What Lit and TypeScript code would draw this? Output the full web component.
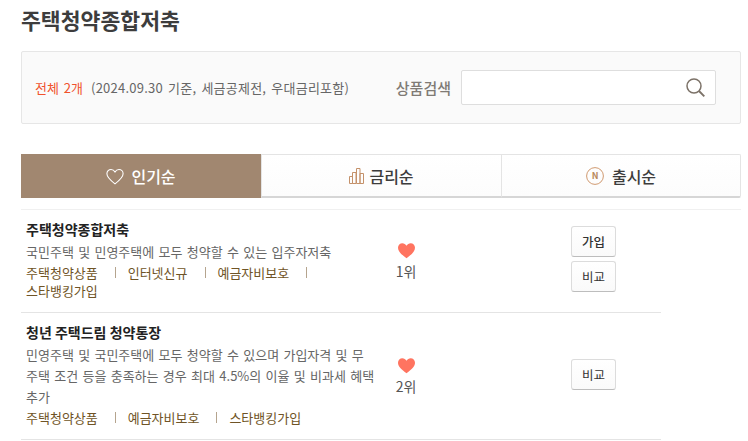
import { LitElement, html, css, svg } from 'lit';
import { customElement } from 'lit/decorators.js';

interface Product {
  name: string;
  desc: string;
  tags: string[];
  rank: string;
  join: boolean;
}

const PRODUCTS: Product[] = [
  {
    name: '주택청약종합저축',
    desc: '국민주택 및 민영주택에 모두 청약할 수 있는 입주자저축',
    tags: ['주택청약상품', '인터넷신규', '예금자비보호', '스타뱅킹가입'],
    rank: '1위',
    join: true,
  },
  {
    name: '청년 주택드림 청약통장',
    desc: '민영주택 및 국민주택에 모두 청약할 수 있으며 가입자격 및 무\n주택 조건 등을 충족하는 경우 최대 4.5%의 이율 및 비과세 혜택\n추가',
    tags: ['주택청약상품', '예금자비보호', '스타뱅킹가입'],
    rank: '2위',
    join: false,
  },
];

const heart = svg`<path d="M10 17.2 C4 12.6 1 9.8 1 6 C1 3.2 3.1 1.2 5.6 1.2 C7.4 1.2 9 2.2 10 4 C11 2.2 12.6 1.2 14.4 1.2 C16.9 1.2 19 3.2 19 6 C19 9.8 16 12.6 10 17.2 Z"/>`;

@customElement('app-root')
export class AppRoot extends LitElement {
  static styles = css`
    :host {
      display: block;
      height: 441px;
      overflow: hidden;
      background: #fff;
      font-family: 'Noto Sans CJK KR', 'Noto Sans', sans-serif;
      color: #333;
    }
    .page {
      padding: 6px 7px 0 21px;
    }
    h1 {
      margin: 0;
      font-size: 21.6px;
      line-height: 28px;
      font-weight: 700;
      color: #3d3d3d;
    }
    .panel {
      margin-top: 17px;
      height: 73px;
      box-sizing: border-box;
      display: flex;
      align-items: center;
      padding: 0 24px 0 13px;
      background: #fafafa;
      border: 1px solid #e6e6e6;
      border-radius: 2px;
    }
    .total {
      font-size: 13px;
      word-spacing: 2px;
      color: #f0522d;
      margin-right: 8px;
    }
    .basis {
      font-size: 13px;
      word-spacing: 2px;
      letter-spacing: 0.23px;
      color: #666;
    }
    .search-label {
      margin-left: auto;
      margin-right: 10px;
      font-size: 15px;
      font-weight: 500;
      color: #7f7a75;
    }
    .search {
      width: 255px;
      height: 35px;
      box-sizing: border-box;
      display: flex;
      align-items: center;
      justify-content: flex-end;
      padding-right: 10px;
      background: #fff;
      border: 1px solid #dedede;
      border-radius: 2px;
    }
    .search svg {
      display: block;
    }
    .tabs {
      margin-top: 30px;
      display: grid;
      grid-template-columns: 240px 241px 239px;
      height: 44px;
    }
    .tab {
      display: flex;
      align-items: center;
      justify-content: center;
      box-sizing: border-box;
      font-size: 16px;
      font-weight: 500;
      color: #3c3c3c;
      border-top: 1px solid #e4e4e4;
      border-bottom: 2px solid #d6d6d6;
      border-right: 1px solid #e4e4e4;
      background: linear-gradient(#fff, #fcfcfc);
    }
    .tab.popular {
      gap: 7px;
      background: #a18770;
      color: #fff;
      border: none;
    }
    .tab.rate {
      gap: 5px;
      border-left: 1px solid #e4e4e4;
    }
    .tab.release {
      gap: 8px;
      border-radius: 0 2px 2px 0;
    }
    .n-mark {
      font-size: 9px;
      font-weight: 700;
      fill: #b98a5e;
      text-anchor: middle;
    }
    .list {
      margin-top: 11px;
      border-top: 1px solid #f0f0f0;
    }
    .row {
      width: 640px;
      box-sizing: border-box;
      display: grid;
      grid-template-columns: 355px 50px 1fr;
      align-items: center;
      padding: 9px 45px 12px 5px;
      border-bottom: 1px solid #e4e4e4;
    }
    .name {
      font-size: 14px;
      line-height: 20px;
      font-weight: 700;
      color: #222;
    }
    .desc {
      margin-top: 2px;
      font-size: 13px;
      line-height: 21px;
      word-spacing: 1.4px;
      white-space: pre-line;
      color: #666;
    }
    .tags {
      margin-top: 2px;
      font-size: 13px;
      line-height: 18px;
      color: #6f5426;
    }
    .tag {
      white-space: nowrap;
    }
    .sep {
      display: inline-block;
      width: 1px;
      height: 11px;
      margin: 0 9px 0 17px;
      background: #b5a48e;
    }
    .rank {
      display: flex;
      flex-direction: column;
      align-items: center;
      padding-top: 4px;
      font-size: 14px;
      line-height: 19px;
      color: #555;
    }
    .rank svg {
      display: block;
      fill: #ff7460;
      margin-bottom: 3px;
    }
    .actions {
      display: flex;
      flex-direction: column;
      gap: 4px;
      justify-self: end;
      margin-top: -1px;
    }
    button {
      width: 45px;
      height: 31px;
      padding: 0;
      box-sizing: border-box;
      font: inherit;
      font-size: 12.5px;
      color: #333;
      background: linear-gradient(#fff, #fafafa);
      border: 1px solid #dcdcdc;
      border-bottom-color: #bdbdbd;
      border-radius: 3px;
    }
    button.strong {
      font-weight: 500;
    }
  `;

  private renderTags(tags: string[]) {
    return tags.map(
      (t, i) => html`<span class="tag">${t}</span>${i < tags.length - 1 ? html`<span class="sep"></span> ` : ''}`
    );
  }

  private renderRow(p: Product) {
    return html`
      <div class="row">
        <div>
          <div class="name">${p.name}</div>
          <div class="desc">${p.desc}</div>
          <div class="tags">${this.renderTags(p.tags)}</div>
        </div>
        <div class="rank">
          <svg width="19" height="17" viewBox="0 0 20 18">${heart}</svg>
          ${p.rank}
        </div>
        <div class="actions">
          ${p.join ? html`<button class="strong">가입</button>` : ''}
          <button>비교</button>
        </div>
      </div>
    `;
  }

  render() {
    return html`
      <div class="page">
        <h1>주택청약종합저축</h1>
        <div class="panel">
          <span class="total">전체 2개</span>
          <span class="basis">(2024.09.30 기준, 세금공제전, 우대금리포함)</span>
          <span class="search-label">상품검색</span>
          <div class="search">
            <svg width="19" height="19" viewBox="0 0 19 19" fill="none" stroke="#7c7268" stroke-width="1.5">
              <circle cx="8" cy="8" r="7" />
              <path d="M13 13 L18.3 18.3" stroke-width="1.9" />
            </svg>
          </div>
        </div>
        <div class="tabs">
          <div class="tab popular">
            <svg width="18" height="17" viewBox="0 0 20 18" fill="none" stroke="#fff" stroke-width="1.2">${heart}</svg>
            인기순
          </div>
          <div class="tab rate">
            <svg width="15" height="16" viewBox="0 0 15 16" fill="none" stroke="#c4916a">
              <path d="M.5 8.5h3v7h-3zM3.5 4.5h3.5v11h-3.5zM7.5.5h3.5v15h-3.5zM11 5.5h3.5v10h-3.5z" />
            </svg>
            금리순
          </div>
          <div class="tab release">
            <svg width="18" height="18" viewBox="0 0 18 18">
              <circle cx="9" cy="9" r="8.4" fill="none" stroke="#d09a70" />
              <text class="n-mark" x="9" y="12.2">N</text>
            </svg>
            출시순
          </div>
        </div>
        <div class="list">${PRODUCTS.map((p) => this.renderRow(p))}</div>
      </div>
    `;
  }
}
